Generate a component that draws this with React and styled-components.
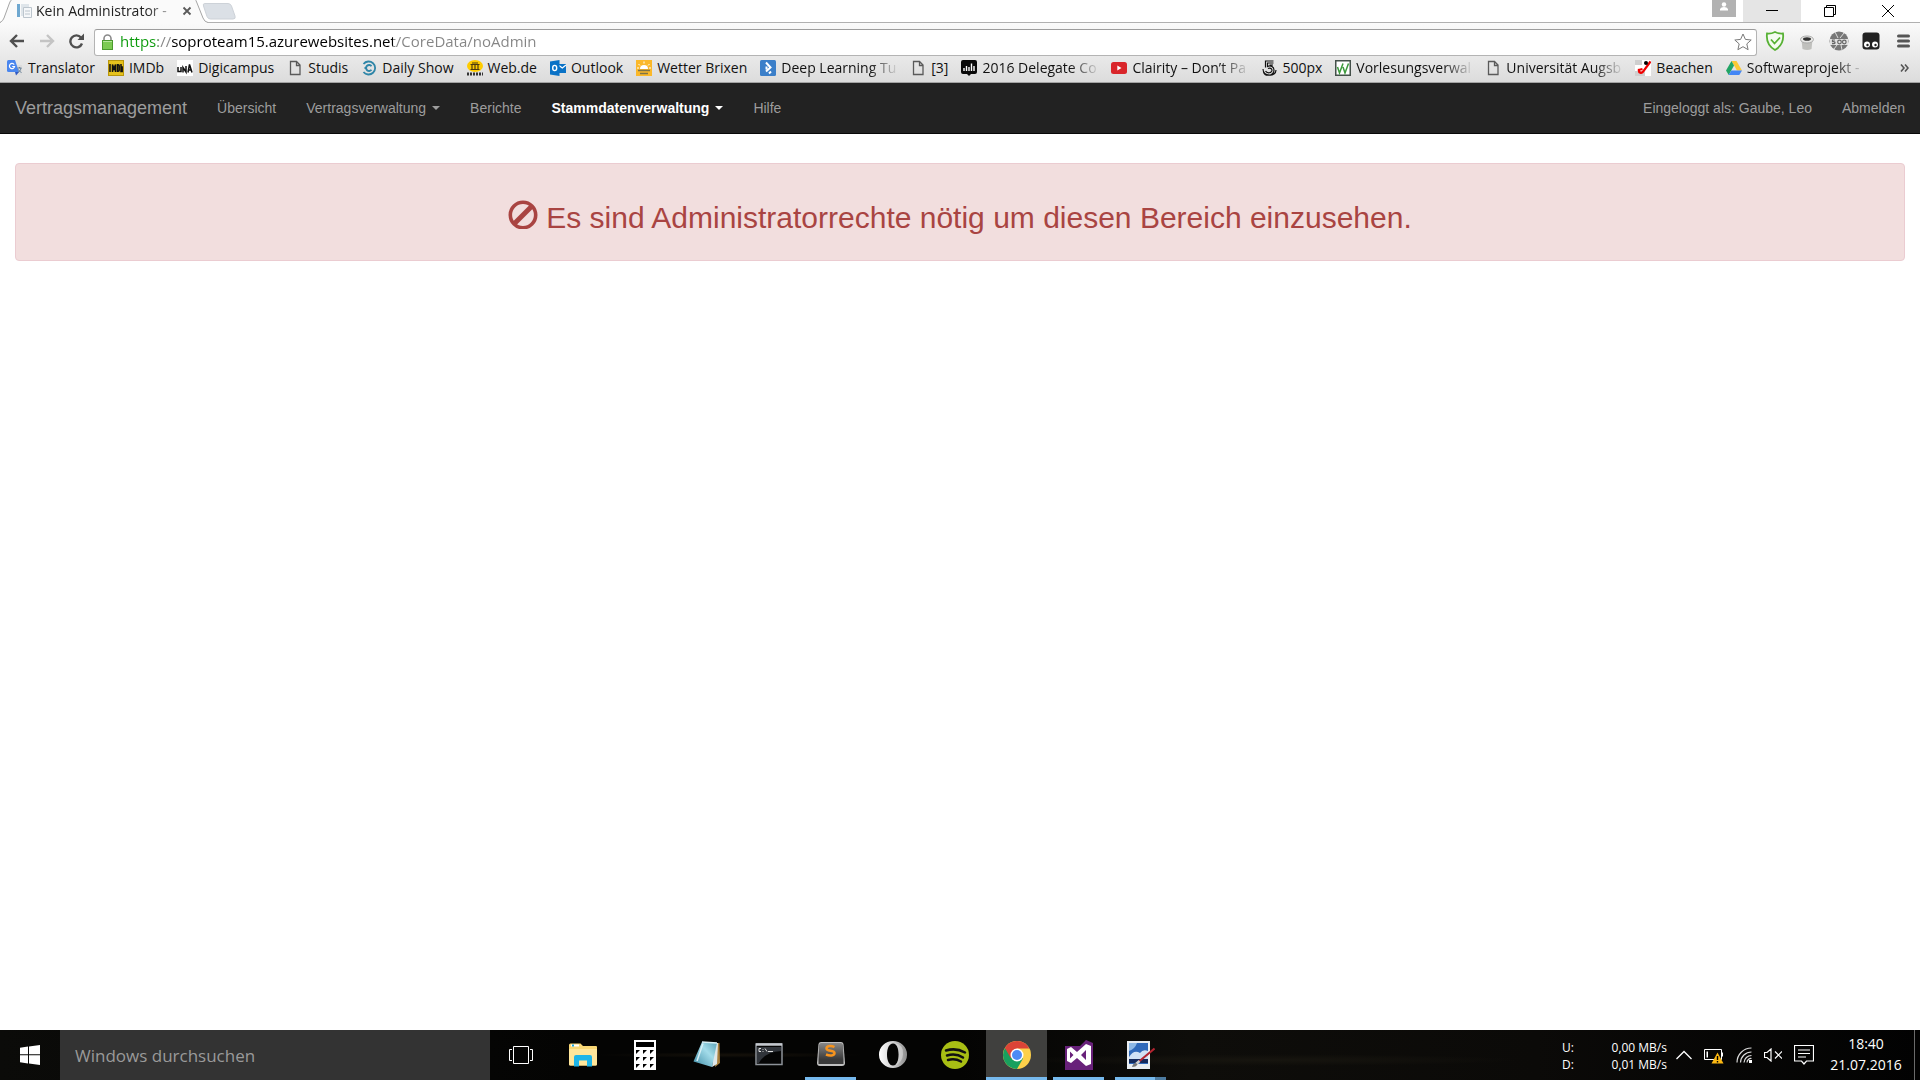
import React from "react";
import styled, { createGlobalStyle, css } from "styled-components";

const ui = `"Open Sans", "Noto Sans", sans-serif`;
const web = `"Liberation Sans", Arial, sans-serif`;

const GlobalStyle = createGlobalStyle`
  *, *::before, *::after { box-sizing: border-box; }
  body { margin: 0; background: #fff; font-family: ${web}; }
  button, input { font: inherit; color: inherit; background: none; border: 0; padding: 0; margin: 0; outline: 0; }
  a { color: inherit; text-decoration: none; }
  svg { display: block; flex: none; }
`;

const Screen = styled.div`
  display: flex;
  flex-direction: column;
  min-height: 100vh;
`;

/* Browser window */

const TabStrip = styled.div`
  display: flex;
  height: 23px;
  background: #fff;
  border-bottom: 1px solid #b0b0b0;
  font-family: ${ui};
`;

const Tab = styled.div`
  position: relative;
  display: flex;
  align-items: center;
  width: 208px;
  height: 23px;
  padding: 0 16px 2px;
  gap: 4px;
  font-size: 14px;
  line-height: 20px;
  color: #222;
`;

const TabShape = styled.svg`
  position: absolute;
  left: 0;
  top: 0;
`;

const TabTitle = styled.span`
  position: relative;
  flex: 1;
  overflow: hidden;
  white-space: nowrap;
  mask-image: linear-gradient(90deg, #000 110px, transparent 146px);
`;

const Layer = styled.span`
  position: relative;
  display: flex;
`;

const TabClose = styled.button`
  position: relative;
  display: flex;
`;

const NewTab = styled.button`
  display: flex;
  align-items: flex-start;
  padding: 3px 0 0 0;
  margin-left: -6px;
  position: relative;
`;

const WindowControls = styled.div`
  display: flex;
  margin-left: auto;
  padding-right: 3px;
`;

const UserBadge = styled.button`
  display: flex;
  justify-content: center;
  width: 24px;
  height: 17px;
  margin-right: 7px;
  background: #b2b2b2;
`;

const WindowButton = styled.button`
  display: flex;
  align-items: center;
  justify-content: center;
  width: 58px;
  height: 22px;
  background: ${(p) => (p.$hot ? "#e5e5e5" : "transparent")};
`;

const BrowserBars = styled.div`
  background: linear-gradient(#fafafa, #dcdcdc);
  border-bottom: 1px solid #a3a3a3;
  font-family: ${ui};
`;

const Toolbar = styled.div`
  display: flex;
  align-items: center;
  height: 34px;
  padding: 2px 1px 0 1px;
`;

const ToolButton = styled.button`
  display: flex;
  align-items: center;
  justify-content: center;
  width: ${(p) => p.$width || 32}px;
  height: 26px;
`;

const AddressBar = styled.div`
  display: flex;
  align-items: center;
  flex: 1;
  height: 27px;
  margin: 2px 2px 0 0;
  padding: 0 4px 1px 6px;
  gap: 6px;
  background: #fff;
  border: 1px solid #b4b4b4;
  border-top-color: #9c9c9c;
  border-radius: 3px;
`;

const AddressInput = styled.input`
  flex: 1;
  height: 24px;
  padding-bottom: 2px;
  font-size: 15px;
  line-height: 22px;
  color: transparent;
  background: linear-gradient(90deg, #0b9a0b 38px, #858585 38px 52px, #000 52px 273px, #858585 273px);
  background-clip: text;
  -webkit-background-clip: text;
`;

const BookmarkBar = styled.div`
  display: flex;
  align-items: center;
  height: 25px;
  padding: 0 11px 3px 7px;
  gap: 13px;
`;

const Bookmark = styled.a`
  display: flex;
  align-items: center;
  gap: 5px;
  font-size: 14px;
  line-height: 20px;
  color: #111;
`;

const BookmarkLabel = styled.span`
  white-space: nowrap;
  ${(p) => p.$faded && css`
    width: 116px;
    mask-image: linear-gradient(90deg, #000 88px, transparent 118px);
  `}
`;

const Overflow = styled.button`
  margin-left: auto;
  display: flex;
`;

/* Web page */

const Navbar = styled.nav`
  display: flex;
  align-items: center;
  height: 51px;
  background: #222;
  border-bottom: 1px solid #080808;
  color: #9d9d9d;
  font-size: 14px;
  line-height: 20px;
`;

const Brand = styled.a`
  padding: 15px;
  font-size: 18px;
`;

const NavLink = styled.a`
  display: flex;
  align-items: center;
  gap: 6px;
  padding: 15px;
  ${(p) => p.$active && css`color: #fff; font-weight: bold;`}
`;

const Caret = styled.span`
  border: 4px solid transparent;
  border-top-color: currentColor;
  border-bottom: 0;
`;

const NavRight = styled.div`
  display: flex;
  margin-left: auto;
`;

const Content = styled.main`
  flex: 1;
  padding: 29px 15px;
`;

const Alert = styled.div`
  padding: 35px 15px 23px;
  border: 1px solid #ebccd1;
  border-radius: 4px;
  background: #f2dede;
  color: #a94442;
`;

const AlertHeading = styled.h2`
  display: flex;
  justify-content: center;
  gap: 8px;
  margin: 0;
  font-size: 30px;
  font-weight: 400;
  line-height: 38px;
`;

/* Task bar */

const TaskBar = styled.footer`
  display: flex;
  height: 50px;
  font-family: ${ui};
  color: #fff;
  background:
    radial-gradient(ellipse at 38% 50%, #15110a, transparent 8%),
    radial-gradient(ellipse at 66% 60%, #17150f, transparent 14%),
    linear-gradient(90deg, #0b0b09, #040403 30%, #040403 50%, #0e0d0a 62%, #0b0a08 80%, #020202);
`;

const StartButton = styled.button`
  display: flex;
  align-items: center;
  justify-content: center;
  width: 60px;
`;

const Search = styled.input`
  width: 430px;
  padding: 0 15px;
  background: #333;
  font-size: 17px;
  &::placeholder { color: #9a9a9a; opacity: 1; }
`;

const TaskList = styled.div`
  display: flex;
  gap: 1px;
`;

const TaskButton = styled.button`
  display: flex;
  flex-direction: column;
  align-items: center;
  justify-content: space-between;
  width: 61px;
  padding-top: 9px;
  background: ${(p) => (p.$active ? "#40403e" : "transparent")};
`;

const RunMark = styled.span`
  width: ${(p) => (p.$wide ? "100%" : "51px")};
  height: 3px;
  background: ${(p) => (p.$stacked ? "linear-gradient(90deg, #76b9ed 40px, #4d7ba0 40px)" : "#76b9ed")};
`;

const Tray = styled.div`
  display: flex;
  align-items: center;
  margin-left: auto;
`;

const Traffic = styled.dl`
  display: grid;
  grid-template-columns: auto auto;
  justify-content: space-between;
  width: 105px;
  margin: 0 9px 0 0;
  padding-top: 2px;
  font-size: 12px;
  line-height: 17px;
  dd { margin: 0; text-align: right; }
`;

const TrayIcons = styled.div`
  display: flex;
  align-items: center;
  gap: 12px;
`;

const TrayButton = styled.button`
  display: flex;
`;

const Clock = styled.time`
  width: 100px;
  padding: 0 0 2px 4px;
  text-align: center;
  font-size: 14px;
  line-height: 21px;
`;

const ShowDesktop = styled.button`
  align-self: stretch;
  width: 6px;
  border-left: 1px solid #6a6a6a;
`;

const Svg = ({ w = 16, h = w, box, children, ...rest }) => (
  <svg width={w} height={h} viewBox={box || `0 0 ${w} ${h}`} fill="none" aria-hidden="true" {...rest}>
    {children}
  </svg>
);

const PageIcon = () => (
  <Svg>
    <path d="M3.500 1.500h6l3.500 3.500v9.500h-9.500zM9.500 1.500v4h3.500" stroke="#5a5a5a" strokeWidth="1.300" />
  </Svg>
);

const bookmarks = [
  { label: "Translator", icon: (
    <Svg>
      <path d="M7 5h8v10H9z" fill="#dcdcdc" />
      <path d="M0 1.500Q0 0 1.500 0H8l4 12H1.500Q0 12 0 10.500z" fill="#4a86ee" />
      <path d="M8 12h4l-3 3.500z" fill="#3059c2" />
      <path d="M7.200 4.600A2.600 2.600 0 1 0 7.600 6.500H5.200" stroke="#fff" strokeWidth="1.200" />
      <path d="M10.500 8h4M12.500 7v1M14 8c-.5 2.500-2 4-3 4.500M11.500 9.500c.5 1.500 2 2.500 3 3" stroke="#667f96" />
    </Svg>) },
  { label: "IMDb", icon: (
    <Svg>
      <rect x=".5" y=".5" width="15" height="15" fill="#e6c21c" stroke="#b8960c" />
      <path d="M2 4v8M4.500 12V4.500L6 9l1.500-4.500V12M9.500 4.700v6.600h.7q1 0 1-1V5.700q0-1-1-1zM13 4v7.500h1.200V7H13" stroke="#111" strokeWidth="1.500" />
    </Svg>) },
  { label: "Digicampus", icon: (
    <Svg>
      <rect width="16" height="16" fill="#fff" />
      <path d="M1 7v4.500h3V7M6 12.500V7.500l3 4.500V6M11 12.500l1.500-8 2.500 8M11.500 10h3" stroke="#111" strokeWidth="1.500" />
    </Svg>) },
  { label: "Studis", icon: <PageIcon /> },
  { label: "Daily Show", icon: (
    <Svg>
      <path d="M2.500 4A6.500 6.500 0 1 1 2.500 12" stroke="#2f86a8" strokeWidth="1.800" />
      <path d="M10.500 6.200A3 3 0 1 0 10.500 9.800M3.500 8h2" stroke="#2f86a8" strokeWidth="1.900" />
    </Svg>) },
  { label: "Web.de", icon: (
    <Svg>
      <ellipse cx="8" cy="6" rx="8" ry="6" fill="#fc0" />
      <path d="M3.500 4.500h9M3.500 9.500h9M5 5v4M8 5v4M11 5v4M5 3h6" stroke="#4b3a10" strokeWidth="1.200" />
      <path d="M0 14h16" stroke="#333" strokeWidth="3" strokeDasharray="2 1" />
    </Svg>) },
  { label: "Outlook", icon: (
    <Svg>
      <path d="M8 4h8v9H8z" fill="#0a72c6" />
      <path d="M9 5.500l3.300 2.500L16 5" stroke="#fff" strokeWidth="1.300" />
      <path d="M0 1.500L9.500 0v16L0 14.500z" fill="#0a72c6" />
      <ellipse cx="4.700" cy="8" rx="2" ry="2.600" stroke="#fff" strokeWidth="1.400" />
    </Svg>) },
  { label: "Wetter Brixen", icon: (
    <Svg>
      <rect width="16" height="16" fill="#fbb829" />
      <path d="M4 9a4 4 0 0 1 8 0z" fill="#fff" />
      <path d="M8 1.500v2M2.500 4l1.500 1.500M13.500 4L12 5.500M1 8h2M13 8h2" stroke="#fff" />
      <path d="M2 10.500h12M4 13.500h8" stroke="#7d7247" strokeWidth="1.600" />
    </Svg>) },
  { label: "Deep Learning Tu", faded: true, icon: (
    <Svg>
      <rect width="16" height="16" rx="1.500" fill="#3b7fc9" />
      <path d="M6 2.500l4.500 5L6 11.500M6.500 6.500v3M9 13.500l2-2" stroke="#fff" strokeWidth="2" />
    </Svg>) },
  { label: "[3]", icon: <PageIcon /> },
  { label: "2016 Delegate Co", faded: true, icon: (
    <Svg>
      <path d="M2 0h12q2 0 2 2v10q0 2-2 2h-4l-2 2-2-2H2q-2 0-2-2V2q0-2 2-2z" fill="#0a0a0a" />
      <path d="M3 11V8M5.500 11V6M8 11V7M10.500 11V3.500M13 11V6" stroke="#fff" strokeWidth="1.400" />
    </Svg>) },
  { label: "Clairity – Don’t Pa", faded: true, icon: (
    <Svg>
      <rect y="2" width="16" height="12" rx="2.500" fill="#d9252a" />
      <path d="M6.300 5.500v5L10.500 8z" fill="#fff" />
    </Svg>) },
  { label: "500px", icon: (
    <Svg>
      <path d="M12.500 1H4.500v6.500M12.500 3H6.500v3.500c3-1.500 6.500 0 6.500 3.500 0 6-9 7-10.500 2M7 8.500c2-1 4 0 4 1.700 0 3-5 3.500-6.500.8M12 5H8.500M2 9c0 8 13 8 13 1" stroke="#111" strokeWidth="1.200" />
    </Svg>) },
  { label: "Vorlesungsverwal", faded: true, icon: (
    <Svg>
      <rect x=".75" y=".75" width="14.500" height="14.500" fill="#fff" stroke="#44504a" strokeWidth="1.500" />
      <path d="M2.500 7l2 6 3.500-9.500M8 7l2 6 3.500-9.500" stroke="#3c9a3c" strokeWidth="1.500" />
    </Svg>) },
  { label: "Universität Augsb", faded: true, icon: <PageIcon /> },
  { label: "Beachen", icon: (
    <Svg>
      <rect width="16" height="16" fill="#fff" />
      <path d="M0 0h7v5H0zM0 11h10v5H0z" fill="#cfcfcf" />
      <path d="M4 9c-1 4 3 5 4.500 2L15.500 1.500M3.500 10l4-1" stroke="#f10000" strokeWidth="2.200" />
      <circle cx="11" cy="3" r="2" fill="#000" />
    </Svg>) },
  { label: "Softwareprojekt -", faded: true, icon: (
    <Svg>
      <path d="M5.500 1h5L16 10.500h-5z" fill="#fbc934" />
      <path d="M5.500 1L8 5.500 2.700 15 0 10.500z" fill="#21a464" />
      <path d="M5.300 10.500H16L13.300 15H2.700z" fill="#4386f5" />
    </Svg>) },
];

const ExplorerIcon = () => (
  <Svg w={28} h={32}>
    <path d="M0 6q0-1.500 1.500-1.500h10L14 7h13q1 0 1 1v17q0 1.500-1.500 1.500H1.500Q0 26.500 0 25z" fill="#f8d775" />
    <path d="M0 10h28v15q0 1.500-1.500 1.500H1.500Q0 26.500 0 25z" fill="#ffe69b" />
    <path d="M2 5.500h8v2H2z" fill="#fff" />
    <path d="M3 5.500h2v2H3z" fill="#1ba6e0" />
    <path d="M5 27.500V18q0-2 2-2h14q2 0 2 2v9.500h-5v-6h-8v6z" fill="#1eb5e8" />
  </Svg>
);

const CalcIcon = () => (
  <Svg w={22} h={32}>
    <path d="M0 1h22v30H0z" fill="#fff" />
    <path d="M2 3h18v5H2z" fill="#000" />
    {[11, 18, 25].map((y) => [2, 9, 16].map((x) => <path key={`${x}-${y}`} d={`M${x} ${y}h4l-4 4z`} fill="#000" />))}
  </Svg>
);

const NotepadIcon = () => (
  <Svg w={28} h={32}>
    <defs>
      <linearGradient id="pad" x1="0" y1="1" x2="1" y2="0">
        <stop offset="0" stopColor="#3d8ba5" /><stop offset=".6" stopColor="#a3dcea" /><stop offset="1" stopColor="#5aa3b8" />
      </linearGradient>
    </defs>
    <path d="M24 4h2.500l.5 20-5 4z" fill="#a77f3d" />
    <path d="M22 4h3l-1 21-5 3z" fill="#dfe7e9" />
    <path d="M9 3l15 1-5 24L.5 22.500z" fill="url(#pad)" />
    <path d="M10 4.500L4 22M9 3l15 1" stroke="#d8eff5" strokeWidth="1.500" />
  </Svg>
);

const TerminalIcon = () => (
  <Svg w={28} h={32}>
    <path d="M1 5h26v20.500H1z" fill="#050505" stroke="#8d9299" strokeWidth="1.500" />
    <path d="M1 5.500h26" stroke="#c4c8ce" strokeWidth="2.500" />
    <path d="M2 8h24v4Q10 13 4 24H2z" fill="#30343a" />
    <path d="M6 9.500H4v3h2M8 10v.8M8 12v.8M10 9.500l2 3M13 12.500h5" stroke="#ddd" />
  </Svg>
);

const SublimeIcon = () => (
  <Svg w={28} h={32}>
    <defs>
      <linearGradient id="key" x1="0" y1="0" x2="0" y2="1"><stop stopColor="#888" /><stop offset="1" stopColor="#3b3b3b" /></linearGradient>
    </defs>
    <path d="M4 3h20q2 0 2.500 2L28 24q0 3-3 3H3q-3 0-3-3L1.500 5Q2 3 4 3z" fill="#c0c0c0" />
    <path d="M4 4h20q1.500 0 2 2l.5 14H1.500L2 6q.5-2 2-2z" fill="url(#key)" />
    <path d="M1.500 20h25v5h-25z" fill="#3a3a3a" />
    <path d="M17.500 8c-3-1.500-8-1.500-8 1.500s8 1.500 8 4.500-5 3-8.500 1.500" stroke="#f7941e" strokeWidth="2.500" />
  </Svg>
);

const OperaIcon = () => (
  <Svg w={28} h={32}>
    <defs>
      <linearGradient id="ring"><stop stopColor="#fff" /><stop offset=".5" stopColor="#cfcfcf" /><stop offset="1" stopColor="#8b8b8b" /></linearGradient>
    </defs>
    <path fillRule="evenodd" d="M14 2a14 13.500 0 1 0 0 27 14 13.500 0 1 0 0-27zM14 4.500c4 0 5.500 5 5.500 11s-1.500 11-5.500 11-6-5-6-11 2-11 6-11z" fill="url(#ring)" />
    <path d="M16 4q9 2 8 11.500-.5 8-8 11 4-4 4-11T16 4z" fill="#e8e8e8" opacity=".5" />
  </Svg>
);

const SpotifyIcon = () => (
  <Svg w={28} h={32}>
    <circle cx="14" cy="16" r="14" fill="#a8be14" />
    <path d="M5 11.500q10-3 19 2M6 16.500q9-2.500 16 2M7 21q7-2 13 1.500" stroke="#111" strokeWidth="2.500" strokeLinecap="round" />
  </Svg>
);

const ChromeIcon = () => (
  <Svg w={28} h={32}>
    <circle cx="14" cy="16" r="14" fill="#fdd04a" />
    <path d="M14 16L1.900 9A14 14 0 0 0 14 30l6-10.500z" fill="#19a05e" />
    <path d="M14 9.500h12.400A14 14 0 0 0 1.900 9L8 19.500z" fill="#db4437" />
    <circle cx="14" cy="16" r="6.500" fill="#fff" />
    <circle cx="14" cy="16" r="5" fill="#4d8bf5" />
  </Svg>
);

const VisualStudioIcon = () => (
  <Svg w={28} h={32}>
    <path d="M0 7h15l6-6 7 3v27H0z" fill="#68217a" />
    <path fillRule="evenodd" d="M21 5l5 2v18l-5 2-9-8-6 5-4-2V10l4-2 6 5zM21 11l-5 5 5 5zM5 12.500v7L8.500 16z" fill="#fff" />
  </Svg>
);

const PaintIcon = () => (
  <Svg w={28} h={32}>
    <path d="M0 2h23v28H0z" fill="#e9edf1" />
    <path d="M2 4h19v21H2z" fill="#2f69ba" />
    <path d="M2 4h8q-2 6-8 8z" fill="#8db8e6" />
    <path d="M2 18q5-8 11-4 3-4 8-2v8H2z" fill="#cfe1f5" />
    <path d="M2 20h19v4H2z" fill="#142a5c" />
    <path d="M27.500 9.500L12 22.500" stroke="#b22430" strokeWidth="2" />
    <path d="M12.500 22l-3.500 3" stroke="#d0d0d0" strokeWidth="2.500" />
    <path d="M9 24q-3 0-4 4 4 0 5.500-2.500z" fill="#777" />
  </Svg>
);

const TaskViewIcon = () => (
  <Svg w={24} h={32}>
    <path d="M4.500 7.500h15v17h-15zM3 10.500H.5v11H3M21 10.500h2.500v11H21" stroke="#fff" />
  </Svg>
);

const tasks = [
  { name: "Taskansicht", Icon: TaskViewIcon },
  { name: "Explorer", Icon: ExplorerIcon },
  { name: "Rechner", Icon: CalcIcon },
  { name: "Editor", Icon: NotepadIcon },
  { name: "Eingabeaufforderung", Icon: TerminalIcon },
  { name: "Sublime Text", Icon: SublimeIcon, running: true },
  { name: "Opera", Icon: OperaIcon },
  { name: "Spotify", Icon: SpotifyIcon },
  { name: "Chrome", Icon: ChromeIcon, running: true, active: true },
  { name: "Visual Studio", Icon: VisualStudioIcon, running: true },
  { name: "Paint", Icon: PaintIcon, running: true, stacked: true },
];

function BrowserChrome() {
  return (
    <header>
      <TabStrip>
        <Tab>
          <TabShape width="208" height="23" viewBox="0 0 208 23" aria-hidden="true">
            <path d="M0 23Q3 21 4 18L9.500 3Q10.500 0 13 0H194Q196 0 197 3L203 18Q204.500 22 208 22.500V23z" fill="#fafafa" />
            <path d="M0 22.500Q3 21 4 18L9.500 3Q10.500 0 12 -.5M195 -.5Q196 0 197 3L203 18Q204.500 22 208 22.500" fill="none" stroke="#a5a5a5" />
          </TabShape>
          <Layer>
            <Svg>
              <path d="M1 1h3v13H1z" fill="#6fa8d0" />
              <path d="M5 1h8v12H5z" fill="#dfe5ea" />
              <path d="M7.500 4.500h8v10h-8zM9 8h5M9 11h5" fill="#f5f7f9" stroke="#bcc5cd" />
            </Svg>
          </Layer>
          <TabTitle>Kein Administrator - </TabTitle>
          <TabClose aria-label="Tab schließen">
            <Svg w={10}><path d="M1.500 1.500l7 7M8.500 1.500l-7 7" stroke="#5a5a5a" strokeWidth="1.800" /></Svg>
          </TabClose>
        </Tab>
        <NewTab aria-label="Neuer Tab">
          <Svg w={34} h={17}>
            <path d="M3 .5h23q2.500 0 3.500 2.500l3.500 10q1 3-2 3H8.500Q6 16 5 13.500L1.500 3Q.500.5 3 .5z" fill="#dbe0e6" stroke="#cdd2d8" />
          </Svg>
        </NewTab>
        <WindowControls>
          <UserBadge aria-label="Profil">
            <Svg w={10} h={12}><circle cx="5" cy="4.500" r="2.200" fill="#fff" /><path d="M1 10.500V9q1-2 4-2t4 2v1.500z" fill="#fff" /></Svg>
          </UserBadge>
          <WindowButton $hot aria-label="Minimieren">
            <Svg w={12}><path d="M0 5.500h12" stroke="#000" /></Svg>
          </WindowButton>
          <WindowButton aria-label="Verkleinern">
            <Svg w={12}><path d="M.5 2.500h9v9h-9zM2.500 2.500v-2h9v9h-2" stroke="#000" /></Svg>
          </WindowButton>
          <WindowButton aria-label="Schließen">
            <Svg w={12}><path d="M0 0l12 12M12 0L0 12" stroke="#000" /></Svg>
          </WindowButton>
        </WindowControls>
      </TabStrip>
      <BrowserBars>
        <Toolbar>
          <ToolButton aria-label="Zurück">
            <Svg><path d="M15 8H2M8 2L2 8l6 6" stroke="#4f4f4f" strokeWidth="2.400" /></Svg>
          </ToolButton>
          <ToolButton $width={27} aria-label="Vorwärts">
            <Svg><path d="M1 8h13M8 2l6 6-6 6" stroke="#c4c4c4" strokeWidth="2.400" /></Svg>
          </ToolButton>
          <ToolButton $width={34} aria-label="Neu laden">
            <Svg><path d="M12 4.500A6 6 0 1 0 13 10.500" stroke="#4f4f4f" strokeWidth="2.400" /><path d="M15 .5v6.500H8.500z" fill="#4f4f4f" /></Svg>
          </ToolButton>
          <AddressBar>
            <Svg w={13} h={16}>
              <path d="M3 8V4.500a3.500 3.500 0 0 1 7 0V8" stroke="#8a8a8a" strokeWidth="1.600" />
              <rect x="1.500" y="6.500" width="10" height="9" fill="#7ccb53" stroke="#4a9a2d" />
              <path d="M2 7.500h9" stroke="#b5e69a" />
            </Svg>
            <AddressInput aria-label="Adresse" defaultValue="https://soproteam15.azurewebsites.net/CoreData/noAdmin" />
            <Svg w={18}><path d="M9 1l2.400 5.400 5.800.6-4.400 3.900 1.300 5.800L9 13.700l-5.100 3 1.300-5.800L.8 7l5.800-.6z" stroke="#7a7a7a" /></Svg>
          </AddressBar>
          <ToolButton aria-label="Adblocker">
            <Svg w={20}><path d="M10 1q4 2 8 1.500c1 8-2 13-8 16.500C4 15.500 1 10.500 2 2.500 6 3 10 1 10 1z" fill="#f4fbf1" stroke="#57b134" strokeWidth="1.800" /><path d="M6 8.500l3.500 4L15 6.500" stroke="#57b134" strokeWidth="1.800" /></Svg>
          </ToolButton>
          <ToolButton aria-label="Dose">
            <Svg w={16} h={20}><path d="M2.500 9h11l-1 9q-4 2-9 0z" fill="#c0c0bd" /><ellipse cx="8" cy="8.500" rx="6.500" ry="3.500" fill="#e8e8e6" stroke="#aaa" /><ellipse cx="8" cy="8" rx="4" ry="1.800" fill="#333" /></Svg>
          </ToolButton>
          <ToolButton aria-label="500px">
            <Svg w={20}>
              <circle cx="10" cy="10" r="9.500" fill="#777" />
              <path d="M6 1l3 6M15 2l-4 5M5 18l3-4M13 19l-1-5" stroke="#ddd" />
              <path d="M1 8h18v6H1z" fill="#e2e2e2" />
              <path d="M6 9H3.500v1.700h1.300q1.200 0 1.200 1t-1.200 1H3" stroke="#666" strokeWidth="1.200" />
              <circle cx="10.500" cy="11" r="1.800" stroke="#666" strokeWidth="1.200" />
              <circle cx="15.300" cy="11" r="1.800" stroke="#666" strokeWidth="1.200" />
            </Svg>
          </ToolButton>
          <ToolButton aria-label="Tampermonkey">
            <Svg w={18}><rect x=".5" y=".5" width="17" height="17" rx="3" fill="#222" /><circle cx="5" cy="12.500" r="3" fill="#fff" /><circle cx="13" cy="12.500" r="3" fill="#fff" /><circle cx="5.500" cy="13" r="1.200" fill="#222" /><circle cx="13.500" cy="13" r="1.200" fill="#222" /></Svg>
          </ToolButton>
          <ToolButton aria-label="Menü">
            <Svg w={13} h={14}><path d="M1.500 2h10M1.500 7h10M1.500 12h10" stroke="#555" strokeWidth="3" strokeLinecap="round" /></Svg>
          </ToolButton>
        </Toolbar>
        <BookmarkBar>
          {bookmarks.map((b) => (
            <Bookmark key={b.label} href="#">
              {b.icon}
              <BookmarkLabel $faded={b.faded}>{b.label}</BookmarkLabel>
            </Bookmark>
          ))}
          <Overflow aria-label="Weitere Lesezeichen">
            <Svg w={9} h={8}><path d="M1 .5L4 4 1 7.500M5 .5L8 4 5 7.500" stroke="#555" strokeWidth="1.600" /></Svg>
          </Overflow>
        </BookmarkBar>
      </BrowserBars>
    </header>
  );
}

function WebPage() {
  return (
    <>
      <Navbar>
        <Brand href="#">Vertragsmanagement</Brand>
        <NavLink href="#">Übersicht</NavLink>
        <NavLink href="#">Vertragsverwaltung <Caret /></NavLink>
        <NavLink href="#">Berichte</NavLink>
        <NavLink href="#" $active>Stammdatenverwaltung <Caret /></NavLink>
        <NavLink href="#">Hilfe</NavLink>
        <NavRight>
          <NavLink href="#">Eingeloggt als: Gaube, Leo</NavLink>
          <NavLink href="#">Abmelden</NavLink>
        </NavRight>
      </Navbar>
      <Content>
        <Alert role="alert">
          <AlertHeading>
            <Svg w={30}>
              <circle cx="15" cy="16" r="12.700" stroke="#a94442" strokeWidth="3.600" />
              <path d="M6 25L24 7" stroke="#a94442" strokeWidth="5" />
            </Svg>
            Es sind Administratorrechte nötig um diesen Bereich einzusehen.
          </AlertHeading>
        </Alert>
      </Content>
    </>
  );
}

function WindowsTaskBar() {
  return (
    <TaskBar>
      <StartButton aria-label="Start">
        <Svg w={20}><path d="M0 2.800L8 1.600V9.300H0zM9 1.400L20 0v9.300H9zM0 10.300h8V18.400L0 17.200zM9 10.300h11V20L9 18.500z" fill="#fff" /></Svg>
      </StartButton>
      <Search aria-label="Windows durchsuchen" placeholder="Windows durchsuchen" />
      <TaskList>
        {tasks.map(({ name, Icon, running, active, stacked }) => (
          <TaskButton key={name} $active={active} aria-label={name}>
            <Icon />
            {running && <RunMark $wide={active} $stacked={stacked} />}
          </TaskButton>
        ))}
      </TaskList>
      <Tray>
        <Traffic>
          <dt>U:</dt><dd>0,00 MB/s</dd>
          <dt>D:</dt><dd>0,01 MB/s</dd>
        </Traffic>
        <TrayIcons>
          <TrayButton aria-label="Ausgeblendete Symbole">
            <Svg w={16} h={10}><path d="M.5 9L8 1.500 15.500 9" stroke="#fff" strokeWidth="1.300" /></Svg>
          </TrayButton>
          <TrayButton aria-label="Akku">
            <Svg w={20} h={18}>
              <path d="M.5 3.500h17v10H.5zM18.500 6.500v4" stroke="#fff" />
              <path d="M2.500 5.500h1.500v6H2.500z" fill="#fff" />
              <path d="M13.500 6.500l6 11h-12z" fill="#fcb813" />
              <path d="M13.500 10v4M13.500 15v1.500" stroke="#000" strokeWidth="1.400" />
            </Svg>
          </TrayButton>
          <TrayButton aria-label="WLAN">
            <Svg w={16}>
              <path d="M1 15.500A14.500 14.500 0 0 1 15.500 1M4.500 15.500A11 11 0 0 1 15.500 5M8 15.500A7.500 7.500 0 0 1 15.500 8.500M11 15.500A4 4 0 0 1 15.500 11.500" stroke="#ddd" strokeWidth="1.200" />
              <path d="M13 13h3v3h-3z" fill="#fff" />
            </Svg>
          </TrayButton>
          <TrayButton aria-label="Lautstärke">
            <Svg w={18} h={14}><path d="M.5 4.500H3L7 1v12L3 9.500H.5zM11 3.500l7 7M18 3.500l-7 7" stroke="#fff" strokeWidth="1.200" /></Svg>
          </TrayButton>
          <TrayButton aria-label="Info-Center">
            <Svg w={20}><path d="M.5.5h19v15.500h-7L10 19l-2.500-3h-7zM4 5h12M4 8.500h12M4 12h8" stroke="#fff" strokeWidth="1.200" /></Svg>
          </TrayButton>
        </TrayIcons>
        <Clock>18:40<br />21.07.2016</Clock>
        <ShowDesktop aria-label="Desktop anzeigen" />
      </Tray>
    </TaskBar>
  );
}

export default function App() {
  return (
    <Screen>
      <GlobalStyle />
      <BrowserChrome />
      <WebPage />
      <WindowsTaskBar />
    </Screen>
  );
}
